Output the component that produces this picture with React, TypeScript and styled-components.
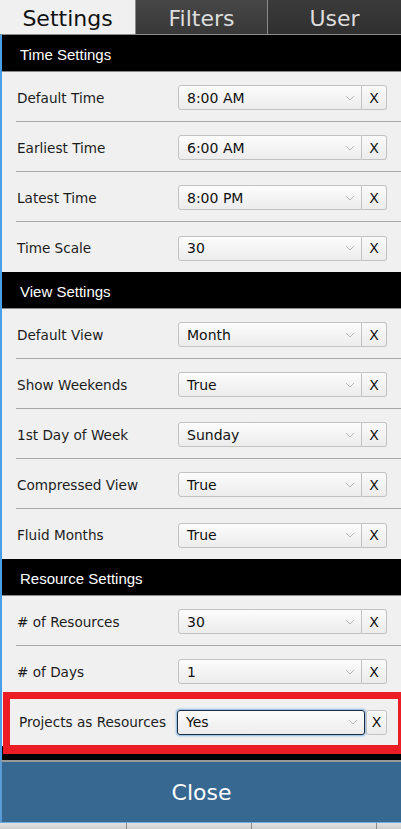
import React from "react";
import styled, { createGlobalStyle } from "styled-components";

const GlobalStyle = createGlobalStyle`
  html, body {
    margin: 0;
    padding: 0;
    background: #f0f0f0;
  }
  #root {
    width: 401px;
    height: 829px;
    overflow: hidden;
  }
`;

type Setting = { label: string; value: string; focused?: boolean };
type Section = { title: string; rows: Setting[] };

const sections: Section[] = [
  {
    title: "Time Settings",
    rows: [
      { label: "Default Time", value: "8:00 AM" },
      { label: "Earliest Time", value: "6:00 AM" },
      { label: "Latest Time", value: "8:00 PM" },
      { label: "Time Scale", value: "30" },
    ],
  },
  {
    title: "View Settings",
    rows: [
      { label: "Default View", value: "Month" },
      { label: "Show Weekends", value: "True" },
      { label: "1st Day of Week", value: "Sunday" },
      { label: "Compressed View", value: "True" },
      { label: "Fluid Months", value: "True" },
    ],
  },
  {
    title: "Resource Settings",
    rows: [
      { label: "# of Resources", value: "30" },
      { label: "# of Days", value: "1" },
      { label: "Projects as Resources", value: "Yes", focused: true },
    ],
  },
];

const tabs = ["Settings", "Filters", "User"];

const App: React.FC = () => {
  return (
    <>
      <GlobalStyle />
      <Screen>
        <TabBar>
          {tabs.map((t, i) => (
            <Tab key={t} $active={i === 0} $index={i}>
              {t}
            </Tab>
          ))}
        </TabBar>

        <Panel>
          {sections.map((s) => (
            <div key={s.title}>
              <SectionHeader>{s.title}</SectionHeader>
              {s.rows.map((r) => (
                <Row key={r.label}>
                  <Label $focused={r.focused}>{r.label}</Label>
                  <Select $focused={r.focused}>
                    <span>{r.value}</span>
                    <svg width="10" height="6" viewBox="0 0 10 6">
                      <path d="M1 1 L5 5 L9 1" fill="none" stroke="#b8b8b8" strokeWidth="1" />
                    </svg>
                  </Select>
                  <ClearButton $focused={r.focused}>X</ClearButton>
                  {r.focused && <Highlight />}
                </Row>
              ))}
            </div>
          ))}
          <Filler />
        </Panel>

        <CloseButton>Close</CloseButton>
        <Footer>
          <span />
          <span />
          <span />
          <span />
        </Footer>
      </Screen>
    </>
  );
};

const Screen = styled.div`
  width: 401px;
  height: 829px;
  display: flex;
  flex-direction: column;
  background: #f0f0f0;
`;

const TabBar = styled.div`
  display: grid;
  grid-template-columns: 135px 132px 134px;
  height: 34px;
  border-bottom: 1px solid #8c8c8c;
  flex-shrink: 0;
`;

const Tab = styled.div<{ $active: boolean; $index: number }>`
  display: flex;
  align-items: center;
  justify-content: center;
  font-family: "DejaVu Sans", Verdana, sans-serif;
  font-size: 22px;
  color: ${(p) => (p.$active ? "#111" : "#dedede")};
  background: ${(p) =>
    p.$active
      ? "#f0f0f0"
      : p.$index === 1
      ? "linear-gradient(#474747, #383838)"
      : "linear-gradient(#3b3b3b, #2f2f2f)"};
  border-left: ${(p) => (p.$index === 0 ? "none" : "1px solid #8a8a8a")};
  padding-top: 2px;
`;

const Panel = styled.div`
  border-left: 2px solid #4a9ee6;
  background: #f0f0f0;
  display: flex;
  flex-direction: column;
  flex-shrink: 0;
`;

const SectionHeader = styled.div`
  box-sizing: border-box;
  height: 37px;
  background: #000;
  border-bottom: 1px solid #8a8a8a;
  color: #fff;
  font-family: "Liberation Sans", Arial, sans-serif;
  font-size: 15px;
  display: flex;
  align-items: center;
  padding: 2px 0 0 18px;
`;

const Row = styled.div`
  position: relative;
  box-sizing: border-box;
  height: 50px;
  margin-left: 14px;
  padding-top: 2px;
  border-bottom: 1px solid #a8a8a8;
  display: flex;
  align-items: center;
  &:last-child {
    border-bottom: none;
  }
`;

const Label = styled.div<{ $focused?: boolean }>`
  width: ${(p) => (p.$focused ? "161px" : "162px")};
  padding-left: ${(p) => (p.$focused ? "3px" : "1px")};
  box-sizing: border-box;
  font-family: "DejaVu Sans", Verdana, sans-serif;
  font-size: 13.6px;
  color: #1c1c1c;
  white-space: nowrap;
`;

const Select = styled.div<{ $focused?: boolean }>`
  box-sizing: border-box;
  width: ${(p) => (p.$focused ? "188px" : "184px")};
  height: 25px;
  display: flex;
  align-items: center;
  justify-content: space-between;
  padding: 0 6px 0 8px;
  font-family: "DejaVu Sans", Verdana, sans-serif;
  font-size: 14px;
  color: #111;
  background: linear-gradient(#fcfcfc, #ececec);
  border: 1px solid ${(p) => (p.$focused ? "#1d2b3a" : "#c2c2c2")};
  border-radius: 3px 0 0 3px;
  ${(p) =>
    p.$focused &&
    `
    border-radius: 3px;
    box-shadow: 0 0 2px 1px #7fb3e8;
  `}
`;

const ClearButton = styled.div<{ $focused?: boolean }>`
  box-sizing: border-box;
  width: ${(p) => (p.$focused ? "21px" : "25px")};
  height: 25px;
  margin-left: ${(p) => (p.$focused ? "1px" : "0")};
  display: flex;
  align-items: center;
  justify-content: center;
  font-family: "DejaVu Sans", Verdana, sans-serif;
  font-size: 14px;
  color: #111;
  background: linear-gradient(#fafafa, #ececec);
  border: 1px solid #c2c2c2;
  border-left: ${(p) => (p.$focused ? "1px solid #c2c2c2" : "none")};
  border-radius: ${(p) => (p.$focused ? "3px" : "0 3px 3px 0")};
`;

const Highlight = styled.div`
  position: absolute;
  left: -13px;
  right: -4px;
  top: -4px;
  height: 46px;
  border: 7px solid #ec1c24;
  border-bottom-width: 9px;
  box-sizing: content-box;
  pointer-events: none;
`;

const Filler = styled.div`
  height: 14px;
  background: #000;
`;

const CloseButton = styled.div`
  flex-shrink: 0;
  height: 60px;
  border-top: 2px solid #9a9a9a;
  border-left: 2px solid #5a9bd6;
  background: #376892;
  color: #fff;
  font-family: "DejaVu Sans", Verdana, sans-serif;
  font-size: 22px;
  display: flex;
  align-items: center;
  justify-content: center;
`;

const Footer = styled.div`
  flex: 1;
  display: grid;
  grid-template-columns: 126px 125px 125px 25px;
  border-top: 1px solid #6fa8dc;
  background: linear-gradient(#e2e2e2, #cfcfcf);
  span + span {
    border-left: 1px solid #8a8a8a;
  }
`;

export default App;
